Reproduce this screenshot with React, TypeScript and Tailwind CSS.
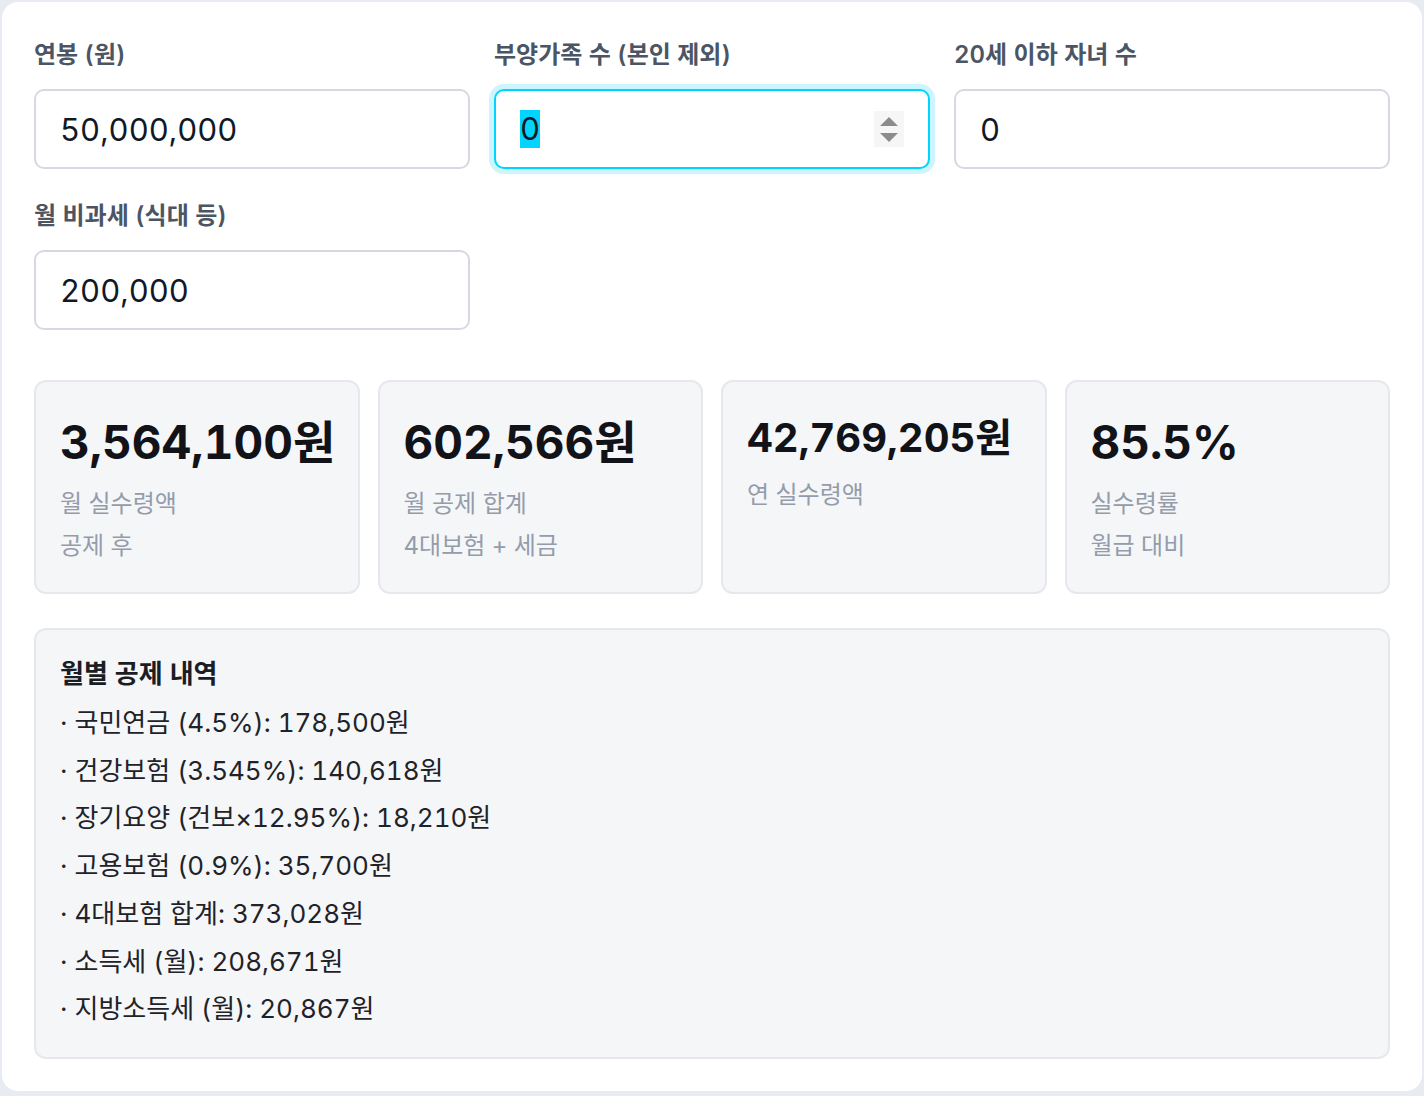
import React from 'react';

const FONT = { fontFamily: 'Inter, "Noto Sans CJK KR", "Noto Sans", sans-serif' };

interface Field {
  label: string;
  value: string;
  focused?: boolean;
}

const fields: Field[] = [
  { label: '연봉 (원)', value: '50,000,000' },
  { label: '부양가족 수 (본인 제외)', value: '0', focused: true },
  { label: '20세 이하 자녀 수', value: '0' },
  { label: '월 비과세 (식대 등)', value: '200,000' },
];

interface Stat {
  value: string;
  label: string;
  note?: string;
  small?: boolean;
}

const stats: Stat[] = [
  { value: '3,564,100원', label: '월 실수령액', note: '공제 후' },
  { value: '602,566원', label: '월 공제 합계', note: '4대보험 + 세금' },
  { value: '42,769,205원', label: '연 실수령액', small: true },
  { value: '85.5%', label: '실수령률', note: '월급 대비' },
];

const breakdown = [
  '국민연금 (4.5%): 178,500원',
  '건강보험 (3.545%): 140,618원',
  '장기요양 (건보×12.95%): 18,210원',
  '고용보험 (0.9%): 35,700원',
  '4대보험 합계: 373,028원',
  '소득세 (월): 208,671원',
  '지방소득세 (월): 20,867원',
];

function Spinner() {
  return (
    <div className="w-[30px] h-[36px] bg-[#f6f6f6] flex flex-col items-center justify-center gap-[7px]">
      <svg width="18" height="9" viewBox="0 0 18 9">
        <path d="M9 0 L18 9 L0 9 Z" fill="#8c8c8c" />
      </svg>
      <svg width="18" height="9" viewBox="0 0 18 9">
        <path d="M0 0 L18 0 L9 9 Z" fill="#8c8c8c" />
      </svg>
    </div>
  );
}

function InputField({ field }: { field: Field }) {
  return (
    <div className="flex flex-col">
      <label className="text-[24px] leading-[33px] font-semibold text-[#4b5563] mb-[18px]">{field.label}</label>
      {field.focused ? (
        <div className="h-[80px] rounded-[10px] border-2 border-[#00d4ff] shadow-[0_0_0_5px_#cdf5fd] bg-white flex items-center pl-[24px] pr-[24px]">
          <span className="text-[31px] leading-[38px] text-[#111827] bg-[#00d4ff]">{field.value}</span>
          <div className="flex-1" />
          <Spinner />
        </div>
      ) : (
        <input
          readOnly
          value={field.value}
          className="h-[80px] rounded-[10px] border-2 border-[#d5d9e2] bg-white px-[24px] text-[31px] text-[#111827] outline-none tabular-nums"
        />
      )}
    </div>
  );
}

function StatCard({ stat }: { stat: Stat }) {
  return (
    <div className="rounded-[12px] border-2 border-[#e6e8ee] bg-[#f5f6f8] px-6 pt-[26px] pb-[30px]">
      <div
        className={`${stat.small ? 'text-[40px]' : 'text-[46px]'} leading-[1.5] font-bold text-[#111318] whitespace-nowrap`}
      >
        {stat.value}
      </div>
      <div className="mt-[10px] text-[24px] leading-[33px] text-[#949cab]">{stat.label}</div>
      {stat.note && <div className="mt-[9px] text-[24px] leading-[33px] text-[#949cab]">{stat.note}</div>}
    </div>
  );
}

export default function App() {
  return (
    <div className="min-h-screen bg-[#e9ebf3] p-[2px] tabular-nums" style={FONT}>
      <div className="bg-white rounded-[16px] px-8 pt-[36px] pb-[32px]">
        <div className="grid grid-cols-3 gap-x-6 gap-y-[30px]">
          {fields.map((f) => (
            <InputField key={f.label} field={f} />
          ))}
        </div>

        <div className="grid grid-cols-4 gap-[18px] mt-[50px]">
          {stats.map((s) => (
            <StatCard key={s.label} stat={s} />
          ))}
        </div>

        <div className="mt-[34px] rounded-[12px] border-2 border-[#e6e8ee] bg-[#f5f6f8] px-6 pt-[26px] pb-6">
          <div className="text-[26px] leading-[36px] font-bold text-[#1a1d23] mb-[7px]">월별 공제 내역</div>
          <ul className="text-[26px] leading-[47.7px] text-[#1f2329]">
            {breakdown.map((line) => (
              <li key={line}>· {line}</li>
            ))}
          </ul>
        </div>
      </div>
    </div>
  );
}
